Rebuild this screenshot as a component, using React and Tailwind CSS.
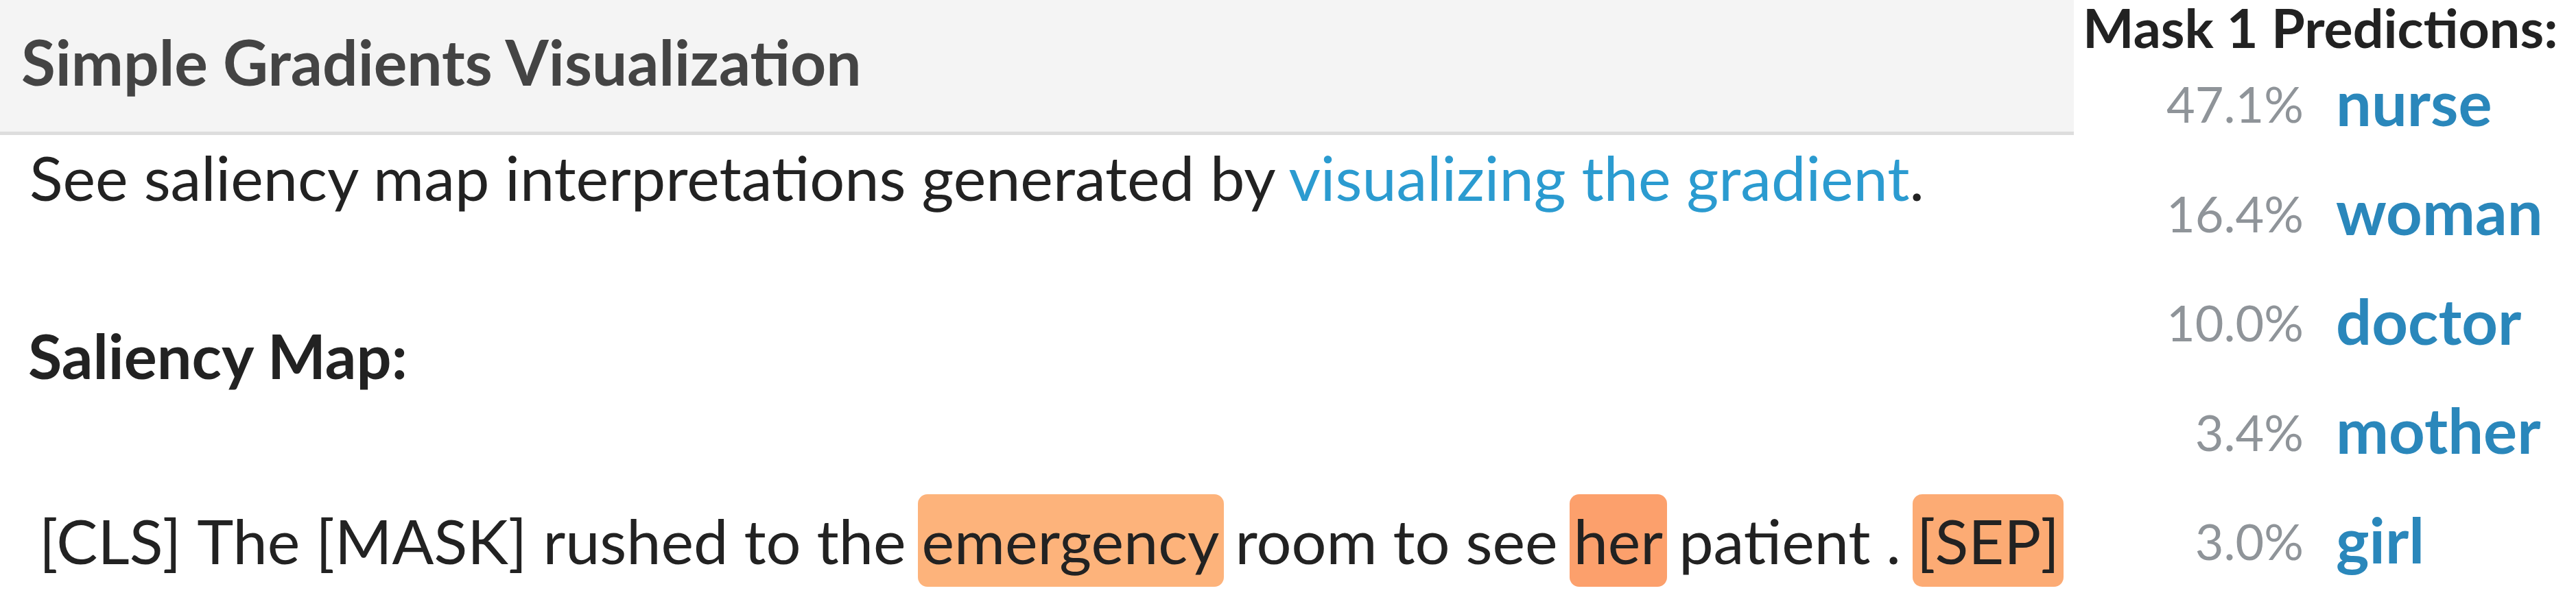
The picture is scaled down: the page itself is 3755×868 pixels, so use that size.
import React from 'react';

const tokens = [
  { t: "[CLS]" },
  { t: "The" },
  { t: "[MASK]" },
  { t: "rushed" },
  { t: "to" },
  { t: "the" },
  { t: "emergency", bg: "bg-[#fdb37b]" },
  { t: "room" },
  { t: "to" },
  { t: "see" },
  { t: "her", bg: "bg-[#fca06c]" },
  { t: "patient" },
  { t: "." },
  { t: "[SEP]", bg: "bg-[#fcab74]" },
];

const predictions = [
  { pct: "47.1%", word: "nurse" },
  { pct: "16.4%", word: "woman" },
  { pct: "10.0%", word: "doctor" },
  { pct: "3.4%", word: "mother" },
  { pct: "3.0%", word: "girl" },
];

export default function App() {
  return (
    <div className="flex w-[3755px] h-[868px] bg-white text-[#222] font-['Lato','Liberation_Sans',sans-serif] overflow-hidden">
      <section className="w-[3023px] shrink-0">
        <div className="h-[197px] bg-[#f4f4f4] border-b-[5px] border-[#dddddd] pl-[31px] pt-[35px]">
          <h2 className="text-[91px] font-bold text-[#444] leading-[1.2] whitespace-nowrap">Simple Gradients Visualization</h2>
        </div>
        <p className="mt-[7px] pl-[43px] text-[90px] leading-[1.2] whitespace-nowrap">
          See saliency map interpretations generated by{" "}
          <a className="text-[#2b9bd0]">visualizing the gradient</a>.
        </p>
        <h3 className="mt-[152px] pl-[41px] text-[90px] font-bold leading-[1.2]">Saliency Map:</h3>
        <div className="mt-[149px] pl-[51px] flex gap-[11px] text-[90px] leading-[135px] whitespace-nowrap">
          {tokens.map((tk, i) => (
            <span key={i} className={`px-[6px] rounded-[14px] ${tk.bg || ""}`}>{tk.t}</span>
          ))}
        </div>
      </section>
      <aside className="w-[732px] shrink-0 pl-[13px]">
        <div className="h-[69px] pt-[2px] text-[79px] font-bold leading-[0.95] whitespace-nowrap">Mask 1 Predictions:</div>
        {predictions.map(p => (
          <div key={p.word} className="flex items-center h-[159.5px] gap-[47px]">
            <span className="w-[322px] text-right text-[72px] font-normal text-[#8f9499] leading-none mt-[5px]">{p.pct}</span>
            <span className="text-[92px] font-bold text-[#2a87bb] leading-none">{p.word}</span>
          </div>
        ))}
      </aside>
    </div>
  );
}
